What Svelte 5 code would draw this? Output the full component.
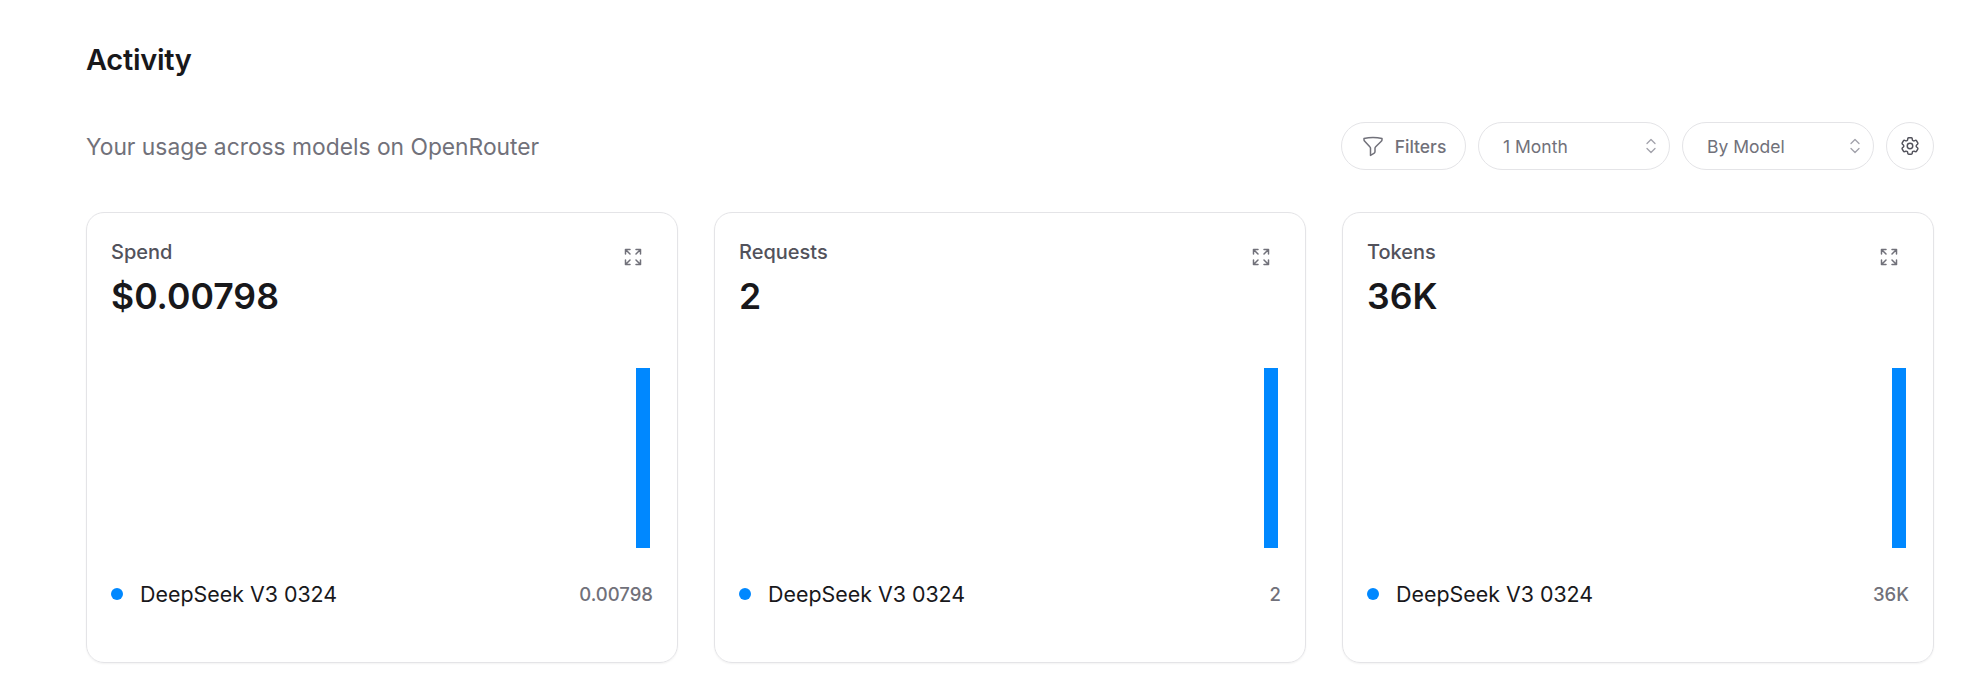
<script>
  const cards = [
    { label: "Spend", total: "$0.00798", value: "0.00798" },
    { label: "Requests", total: "2", value: "2" },
    { label: "Tokens", total: "36K", value: "36K" },
  ];
</script>

<div class="page">
  <h1>Activity</h1>

  <div class="toolbar">
    <p>Your usage across models on OpenRouter</p>
    <div class="controls">
      <button class="pill filters">
        <svg width="24" height="24" viewBox="0 0 24 24" fill="none" stroke="currentColor" stroke-width="1.5" stroke-linecap="round" stroke-linejoin="round">
          <path d="M3 4.5c3-.7 6-1 9-1s6 .3 9 1v1.2c0 .6-.2 1.100-.7 1.500l-5.600 5.600c-.4.400-.7 1-.7 1.500v3.200c0 .800-.4 1.500-1.100 1.900l-3.400 2v-7.100c0-.5-.3-1.100-.7-1.500L3.700 7.200C3.200 6.800 3 6.300 3 5.700z" />
        </svg>
        Filters
      </button>
      {#each ["1 Month", "By Model"] as opt}
        <button class="pill select">
          <span>{opt}</span>
          <svg width="16" height="24" viewBox="0 0 16 24" fill="none" stroke="#a1a1aa" stroke-width="1.300" stroke-linecap="round" stroke-linejoin="round">
            <path d="M4 9.500l4-4 4 4M4 14.500l4 4 4-4" />
          </svg>
        </button>
      {/each}
      <button class="pill gear" aria-label="Settings">
        <svg width="22" height="22" viewBox="0 0 24 24" fill="none" stroke="currentColor" stroke-width="1.600" stroke-linecap="round" stroke-linejoin="round">
          <path d="M9.590 3.940c.090-.540.560-.940 1.110-.940h2.590c.550 0 1.020.400 1.110.940l.210 1.280c.060.370.310.680.660.870.080.040.150.090.230.130.330.200.730.260 1.090.130l1.220-.460c.510-.190 1.090.020 1.370.500l1.300 2.250c.270.480.160 1.080-.260 1.430l-1 .830c-.290.240-.430.600-.430.980 0 .090 0 .180 0 .270 0 .370.140.730.430.970l1 .830c.420.350.530.950.260 1.430l-1.300 2.250c-.280.480-.860.690-1.370.500l-1.220-.460c-.360-.130-.760-.070-1.090.130-.080.050-.150.090-.230.130-.350.190-.600.500-.660.870l-.210 1.280c-.090.540-.560.940-1.110.940h-2.590c-.550 0-1.020-.400-1.110-.940l-.210-1.280c-.060-.370-.310-.680-.660-.870-.080-.040-.150-.090-.230-.130-.330-.200-.730-.260-1.090-.130l-1.220.460c-.510.190-1.090-.020-1.370-.500l-1.300-2.250c-.270-.480-.160-1.080.260-1.430l1-.830c.290-.240.430-.600.430-.970 0-.090 0-.180 0-.270 0-.380-.140-.740-.430-.980l-1-.830c-.420-.350-.530-.950-.260-1.430l1.300-2.250c.280-.480.860-.690 1.370-.500l1.220.460c.360.130.760.070 1.090-.130.080-.040.150-.090.230-.130.350-.190.600-.500.660-.870z" />
          <circle cx="12" cy="12" r="3" />
        </svg>
      </button>
    </div>
  </div>

  <div class="cards">
    {#each cards as c}
      <section class="card">
        <div class="head">
          <div>
            <h2>{c.label}</h2>
            <div class="total">{c.total}</div>
          </div>
          <svg class="expand" width="20" height="20" viewBox="0 0 20 20" fill="none" stroke="currentColor" stroke-width="1.500" stroke-linecap="round" stroke-linejoin="round">
            <path d="M2.500 7V2.500H7M2.500 2.500L7 7M13 2.500h4.500V7M17.500 2.500L13 7M2.500 13v4.500H7M2.500 17.500L7 13M13 17.500h4.500V13M17.500 17.500L13 13" />
          </svg>
        </div>
        <div class="chart"><div class="bar"></div></div>
        <div class="legend">
          <span class="dot"></span>
          <span class="model">DeepSeek V3 0324</span>
          <span class="value">{c.value}</span>
        </div>
      </section>
    {/each}
  </div>
</div>

<style>
  :global(body) { background: #fff; font-family: Inter, "Liberation Sans", sans-serif; }
  .page { padding: 40px 49px 24px 86px; box-sizing: border-box; height: 686px; overflow: hidden; }
  h1 { margin: 0; font-size: 29px; line-height: 40px; font-weight: 600; color: #18181b; letter-spacing: -0.3px; }
  .toolbar { display: flex; justify-content: space-between; align-items: center; margin-top: 42px; height: 48px; }
  .toolbar p { margin: 0; font-size: 22.8px; color: #71717a; }
  .controls { display: flex; gap: 12px; }
  .pill { height: 48px; box-sizing: border-box; border: 1px solid #e4e4e7; border-radius: 24px; background: #fff; color: #71717a; font: 500 17.5px Inter, "Liberation Sans", sans-serif; display: flex; align-items: center; padding: 0; }
  .filters { width: 125px; justify-content: center; gap: 10px; }
  .select { width: 192px; justify-content: space-between; padding: 0 10px 0 24px; font-weight: 400; }
  .gear { width: 48px; justify-content: center; color: #52525b; }
  .cards { display: grid; grid-template-columns: repeat(3, 1fr); gap: 36px; margin-top: 42px; }
  .card { height: 451px; box-sizing: border-box; border: 1px solid #e4e4e7; border-radius: 18px; padding: 26px 24px 0; box-shadow: 0 1px 2px rgba(0,0,0,0.05); display: flex; flex-direction: column; }
  .head { display: flex; justify-content: space-between; align-items: flex-start; }
  h2 { margin: 0; font-size: 20px; line-height: 26px; font-weight: 500; color: #52525b; }
  .total { font-size: 35.6px; line-height: 46px; font-weight: 600; color: #18181b; margin-top: 9px; }
  .expand { color: #71717a; margin: 8px 10px 0 0; }
  .chart { height: 180px; margin-top: 48px; display: flex; justify-content: flex-end; padding-right: 3px; }
  .bar { width: 14px; height: 100%; background: #0088ff; }
  .legend { display: flex; align-items: center; margin-top: 31px; height: 30px; }
  .dot { width: 12px; height: 12px; border-radius: 50%; background: #0088ff; margin-right: 17px; }
  .model { font-size: 21.4px; color: #18181b; }
  .value { margin-left: auto; font-size: 18.5px; font-weight: 500; color: #71717a; }
</style>
